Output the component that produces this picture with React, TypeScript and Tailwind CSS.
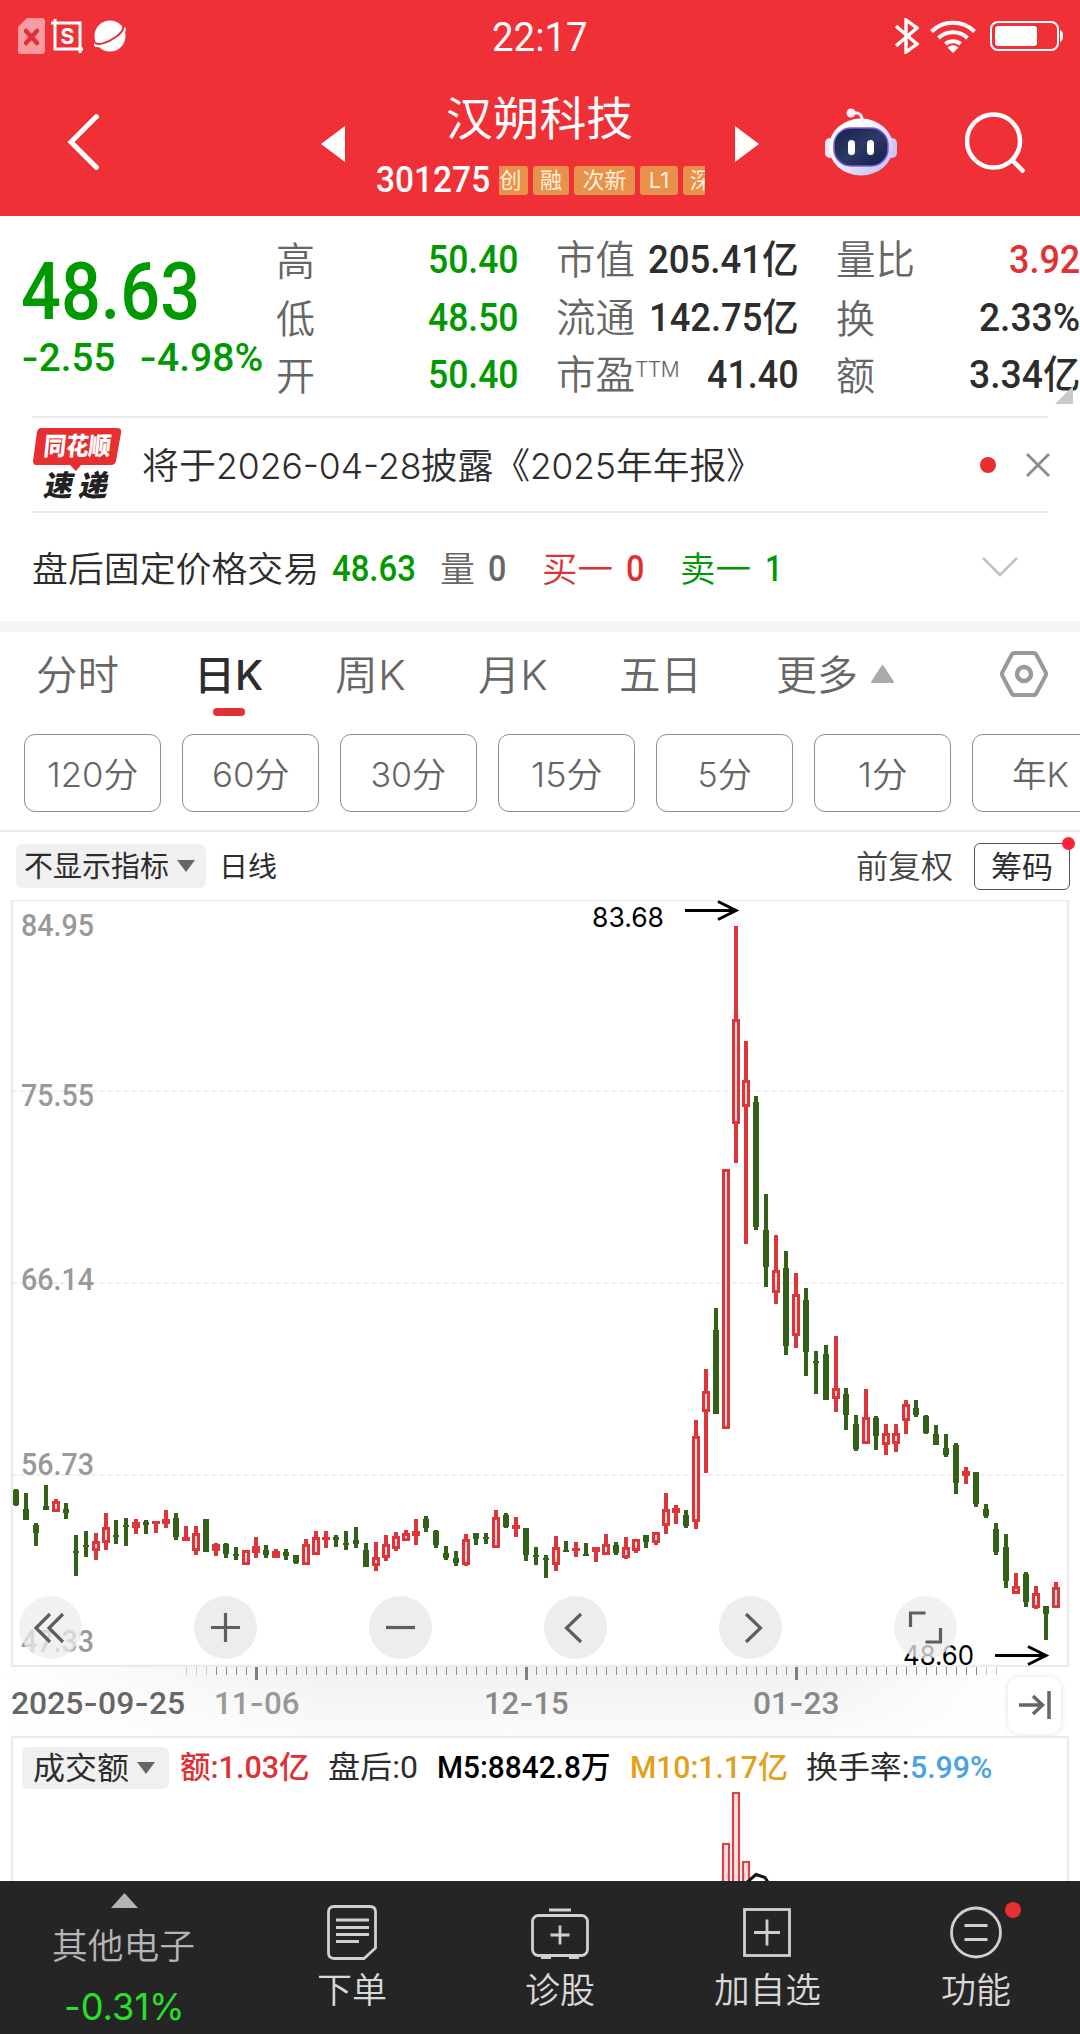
import { useLayoutEffect, useRef, type ReactNode } from "react";

type FitProps = { w: number; className?: string; children: ReactNode };

// Squeezes a single line of text to a fixed width, like the condensed app font.
function Fit({ w, className = "", children }: FitProps) {
  const ref = useRef<HTMLSpanElement>(null);

  useLayoutEffect(() => {
    const el = ref.current;
    if (el && el.offsetWidth) {
      el.style.transform = `scaleX(${w / el.offsetWidth})`;
    }
  }, [w, children]);

  return (
    <span className={`block shrink-0 whitespace-nowrap ${className}`} style={{ width: w }}>
      <span ref={ref} className="inline-block origin-left align-top">
        {children}
      </span>
    </span>
  );
}

const Dash = () => <span className="font-['Inter']">-</span>;

// [up, high, body top, body bottom, low], one entry per trading day
const candles: [number, number, number, number, number][] = [
  [0, 589, 590, 605, 606], [0, 593, 609, 620, 620], [0, 623, 625, 633, 646],
  [0, 585, 606, 610, 610], [1, 599, 601, 612, 612], [0, 603, 609, 613, 619],
  [0, 635, 651, 653, 676], [0, 631, 645, 647, 657], [1, 633, 641, 651, 660],
  [1, 613, 627, 643, 650], [0, 620, 635, 637, 644], [0, 618, 625, 627, 646],
  [1, 619, 622, 628, 634], [0, 620, 622, 625, 634], [1, 621, 621, 624, 633],
  [1, 610, 619, 624, 628], [0, 613, 618, 637, 640], [1, 626, 637, 641, 641],
  [1, 626, 633, 651, 655], [0, 619, 619, 652, 652], [1, 643, 644, 651, 656],
  [0, 643, 644, 654, 658], [0, 647, 654, 656, 660], [1, 650, 650, 665, 665],
  [1, 637, 646, 653, 658], [0, 645, 650, 655, 658], [1, 649, 651, 658, 658],
  [0, 649, 652, 656, 660], [0, 655, 655, 663, 664], [1, 639, 644, 665, 665],
  [1, 631, 637, 655, 655], [1, 631, 637, 640, 648], [0, 635, 637, 640, 647],
  [0, 631, 643, 645, 650], [0, 627, 640, 644, 648], [0, 643, 650, 667, 667],
  [1, 642, 657, 666, 671], [1, 635, 644, 658, 661], [1, 632, 636, 649, 651],
  [1, 630, 633, 641, 641], [1, 619, 631, 636, 645], [0, 616, 619, 628, 632],
  [0, 630, 631, 645, 648], [0, 646, 653, 658, 660], [0, 651, 658, 663, 666],
  [1, 634, 639, 665, 666], [0, 633, 633, 639, 645], [0, 633, 637, 639, 644],
  [1, 610, 617, 648, 648], [0, 613, 615, 627, 628], [1, 617, 625, 629, 637],
  [0, 628, 628, 655, 661], [0, 647, 655, 657, 665], [0, 655, 658, 660, 678],
  [1, 636, 647, 665, 671], [0, 641, 650, 652, 652], [1, 642, 648, 651, 657],
  [0, 643, 654, 656, 656], [1, 647, 647, 652, 662], [1, 634, 644, 655, 655],
  [0, 642, 645, 653, 655], [1, 637, 647, 658, 659], [1, 639, 639, 651, 653],
  [0, 635, 635, 642, 648], [1, 632, 632, 643, 645], [1, 593, 609, 626, 634],
  [1, 605, 608, 613, 624], [0, 610, 615, 626, 628], [1, 520, 536, 622, 629],
  [1, 469, 491, 512, 573], [0, 408, 430, 514, 514], [1, 269, 269, 529, 529],
  [1, 26, 119, 224, 263], [1, 141, 180, 207, 344], [0, 196, 202, 327, 330],
  [0, 294, 330, 367, 387], [1, 335, 370, 393, 404], [0, 351, 368, 446, 455],
  [1, 373, 394, 436, 448], [0, 388, 400, 452, 476], [0, 451, 461, 463, 494],
  [0, 445, 454, 500, 500], [1, 436, 488, 499, 512], [0, 488, 494, 515, 530],
  [0, 515, 524, 549, 551], [1, 489, 517, 544, 544], [0, 516, 518, 536, 550],
  [1, 524, 533, 545, 555], [1, 524, 533, 544, 552], [1, 500, 504, 521, 534],
  [0, 500, 508, 515, 517], [0, 515, 516, 533, 534], [0, 525, 534, 545, 545],
  [0, 534, 548, 555, 557], [0, 543, 545, 583, 594], [1, 567, 571, 576, 584],
  [0, 572, 572, 604, 607], [0, 604, 609, 616, 618], [0, 623, 629, 652, 655],
  [0, 634, 647, 681, 688], [1, 673, 686, 694, 694], [0, 672, 674, 702, 707],
  [1, 686, 693, 708, 709], [0, 706, 706, 714, 740], [1, 682, 687, 708, 708],
];

const axisPrices = [
  { label: "84.95", y: 36 },
  { label: "75.55", y: 206 },
  { label: "66.14", y: 390 },
  { label: "56.73", y: 575 },
  { label: "47.33", y: 752 },
];

function StatusBar() {
  return (
    <div className="flex h-[76px] items-center">
      <svg className="-mt-1 ml-[18px] h-9 w-[27px]" viewBox="0 0 27 36">
        <path d="M9 0h15a3 3 0 0 1 3 3v30a3 3 0 0 1-3 3H3a3 3 0 0 1-3-3V9z" fill="#f99ba0" />
        <path d="M8 13l11 12M19 13L8 25" stroke="#e0303a" strokeWidth="4.5" strokeLinecap="round" />
      </svg>
      <svg className="-mt-1 ml-1.5 h-[34px] w-8" viewBox="0 0 32 34" fill="none" stroke="#fff" strokeWidth="3">
        <path d="M0 4h29v30M4 0v30h28" />
        <text x="16.5" y="25" textAnchor="middle" fontSize="21" fontWeight="700" fontFamily="Inter" fill="#fff" stroke="none">S</text>
      </svg>
      <svg className="-mt-1 ml-[11px] h-8 w-8" viewBox="0 0 32 32">
        <circle cx="16" cy="16" r="15.5" fill="#fff" />
        <path d="M23 8c5-2 9-1 9 1 0 5-9 12-18 16-8 3-14 3-14 0 0-1 1-3 2-4" fill="#fff" />
        <path d="M1 22.500c2 3 12 1 20-5 6-4 9-8 8-11" fill="none" stroke="#e5303a" strokeWidth="2" />
      </svg>
      <Fit w={96} className="ml-[366px] text-[40px] leading-[76px] font-['Roboto']">22:17</Fit>
      <svg className="-mt-1 ml-[307px] h-9 w-6" viewBox="0 0 24 36" fill="none" stroke="#fff" strokeWidth="3.4">
        <path d="M1 8l21 18-11 8V2l11 8L1 28" />
      </svg>
      <svg className="-mt-1 ml-[11px] h-[33px] w-[46px]" viewBox="0 0 46 33" fill="none" stroke="#fff" strokeWidth="4">
        <path d="M1.500 11.500a31 31 0 0 1 43 0M8.500 18a21.500 21.500 0 0 1 29 0M15.500 24a11.500 11.500 0 0 1 15 0" />
        <path d="M17.500 27.500q5.500-4.500 11 0L23 33z" fill="#fff" stroke="none" />
      </svg>
      <svg className="-mt-1 ml-3.5 h-[30px] w-[74px]" viewBox="0 0 74 30">
        <rect x="1" y="1" width="67" height="28" rx="7" fill="none" stroke="#fff" strokeWidth="2" />
        <path d="M70 9q3 1 3 6t-3 6z" fill="#fff" />
        <rect x="5" y="5" width="42" height="20" rx="3" fill="#fff" />
      </svg>
    </div>
  );
}

function Robot() {
  return (
    <svg className="ml-[66px] h-[68px] w-[72px]" viewBox="0 0 72 68">
      <defs>
        <linearGradient id="head" x1="0" y1="0" x2="1" y2="1">
          <stop offset="0.3" stopColor="#fff" />
          <stop offset="1" stopColor="#b9b5f6" />
        </linearGradient>
        <linearGradient id="visor" x1="0" y1="0" x2="1" y2="1">
          <stop offset="0" stopColor="#16204a" />
          <stop offset="0.5" stopColor="#2b3a63" />
          <stop offset="1" stopColor="#151c48" />
        </linearGradient>
      </defs>
      <path d="M37 12c0-5-3-8-9-7" fill="none" stroke="#f1e9fb" strokeWidth="3" />
      <circle cx="26" cy="5" r="4.500" fill="#f6effd" />
      <rect x="0" y="30" width="12" height="20" rx="5" fill="#e9e7fd" />
      <rect x="60" y="30" width="12" height="20" rx="5" fill="#c9c6f8" />
      <ellipse cx="36" cy="39" rx="32" ry="28.500" fill="url(#head)" />
      <rect x="9" y="20" width="54" height="38" rx="17" fill="url(#visor)" stroke="#7d5be6" strokeWidth="1.500" />
      <rect x="23" y="32" width="7" height="15" rx="3.500" fill="#fff" />
      <rect x="42" y="32" width="7" height="15" rx="3.500" fill="#fff" />
    </svg>
  );
}

function Tag({ children, className = "" }: { children: ReactNode; className?: string }) {
  return (
    <span className={`h-[29px] shrink-0 rounded-[3px] bg-[#e8914b] text-center text-[22px] leading-[29px] text-[#fff0d8] ${className}`}>
      {children}
    </span>
  );
}

function Header() {
  return (
    <header className="h-[216px] bg-[#ef3037] text-white">
      <StatusBar />
      <div className="flex h-[132px] items-center">
        <svg className="ml-[67px] h-14 w-8" viewBox="0 0 32 56" fill="none" stroke="#fff" strokeWidth="5">
          <path d="M31 1L4 28l27 27" />
        </svg>
        <svg className="mt-1 ml-[222px] h-9 w-6 shrink-0" viewBox="0 0 24 36">
          <path d="M24 0v36L0 18z" fill="#fff" />
        </svg>
        <div className="ml-[31px] w-[329px] shrink-0 self-start pt-[13px]">
          <Fit w={187} className="ml-[70px] text-[46px] leading-[58px]">汉朔科技</Fit>
          <div className="mt-2 flex h-[50px] items-center">
            <Fit w={114} className="text-[37px] leading-[50px] font-medium font-['Roboto']">301275</Fit>
            <div className="ml-[9px] flex w-[206px] gap-[5px] overflow-hidden">
              <Tag className="w-[29px] rounded-l-none pr-1.5">创</Tag>
              <Tag className="w-9">融</Tag>
              <Tag className="w-[61px]">次新</Tag>
              <Tag className="w-[38px]">L1</Tag>
              <Tag className="w-9">深</Tag>
            </div>
          </div>
        </div>
        <svg className="mt-1 ml-[30px] h-9 w-6 shrink-0" viewBox="0 0 24 36">
          <path d="M0 0v36l24-18z" fill="#fff" />
        </svg>
        <Robot />
        <svg className="ml-[68px] h-[62px] w-[62px]" viewBox="0 0 62 62" fill="none" stroke="#fff" strokeWidth="4.500">
          <circle cx="28.500" cy="30" r="26.500" />
          <path d="M47 49l12 12" />
        </svg>
      </div>
    </header>
  );
}

const num = "text-[39px] font-medium font-['Roboto','Noto_Sans_CJK_SC',sans-serif]";

function Quote() {
  return (
    <section className="relative flex h-[200px]">
      <div className="w-[276px] shrink-0 pt-[36px] pl-[21px] text-[#009900]">
        <Fit w={179} className="text-[80px] leading-[80px] font-medium font-['Roboto']">48.63</Fit>
        <div className={`flex gap-6 leading-[50px] ${num}`}>
          <Fit w={94}><Dash />2.55</Fit>
          <Fit w={124}><Dash />4.98%</Fit>
        </div>
      </div>
      <div className="w-[243px] shrink-0 pt-[16px] leading-[57.5px]">
        {[["高", "50.40"], ["低", "48.50"], ["开", "50.40"]].map(([label, value]) => (
          <div key={label} className="flex justify-between">
            <span className="text-[39px] font-[350] text-[#666]">{label}</span>
            <Fit w={91} className={`text-[#009900] ${num}`}>{value}</Fit>
          </div>
        ))}
      </div>
      <div className="ml-[37px] w-[243px] shrink-0 pt-[16px] leading-[57.5px]">
        <div className="flex justify-between">
          <span className="text-[39.500px] font-[350] text-[#666]">市值</span>
          <Fit w={151} className={`text-[#2d2d2d] ${num}`}>205.41亿</Fit>
        </div>
        <div className="flex justify-between">
          <span className="text-[39.500px] font-[350] text-[#666]">流通</span>
          <Fit w={150} className={`text-[#2d2d2d] ${num}`}>142.75亿</Fit>
        </div>
        <div className="flex justify-between">
          <span className="flex text-[39.500px] font-[350] text-[#666]">
            市盈
            <span className="-mt-1.5 text-[21px] font-light tracking-[-0.5px]">TTM</span>
          </span>
          <Fit w={92} className={`text-[#2d2d2d] ${num}`}>41.40</Fit>
        </div>
      </div>
      <div className="ml-[37px] w-[244px] shrink-0 pt-[16px] leading-[57.5px]">
        <div className="flex justify-between">
          <span className="text-[39.500px] font-[350] text-[#666]">量比</span>
          <Fit w={71} className={`text-[#e03236] ${num}`}>3.92</Fit>
        </div>
        <div className="flex justify-between">
          <span className="text-[39px] font-[350] text-[#666]">换</span>
          <Fit w={101} className={`text-[#2d2d2d] ${num}`}>2.33%</Fit>
        </div>
        <div className="flex justify-between">
          <span className="text-[39px] font-[350] text-[#666]">额</span>
          <Fit w={111} className={`text-[#2d2d2d] ${num}`}>3.34亿</Fit>
        </div>
      </div>
      <svg className="absolute right-[7px] bottom-3 h-[18px] w-[18px]" viewBox="0 0 18 18">
        <path d="M18 0v18H0z" fill="#c9c9c9" />
      </svg>
    </section>
  );
}

function News() {
  return (
    <section className="mx-8 flex h-[97px] items-center border-y-2 border-[#ebebeb]">
      <div className="relative h-[76px] w-[90px] shrink-0">
        <svg className="absolute inset-0" viewBox="0 0 90 76">
          <path d="M9 1h76q5 0 4 5l-5 28q-1 4-5 4H49l-5 6-6-6H4q-3 0-3-4L5 5q1-4 4-4z" fill="#e52f30" />
        </svg>
        <div className="relative flex flex-col items-center">
          <Fit w={67} className="h-[38px] -skew-x-6 text-[25px] leading-[39px] font-black text-white">同花顺</Fit>
          <Fit w={64} className="-skew-x-12 text-[29px] leading-[42px] font-black text-[#222]">速 递</Fit>
        </div>
      </div>
      <div className="ml-5 flex pt-0.5 text-[36px] leading-[60px] text-[#2d2d2d] font-[350]">
        <Fit w={74}>将于</Fit>
        <Fit w={205}>2026-04-28</Fit>
        <Fit w={109}>披露《</Fit>
        <Fit w={86}>2025</Fit>
        <Fit w={147}>年年报》</Fit>
      </div>
      <span className="ml-[217px] h-4 w-4 shrink-0 rounded-full bg-[#e52f30]" />
      <svg className="-mr-0.5 ml-[30px] h-6 w-6 shrink-0" viewBox="0 0 24 24" stroke="#8c8c8c" strokeWidth="2.800">
        <path d="M1 1l22 22M23 1L1 23" />
      </svg>
    </section>
  );
}

function AfterHours() {
  return (
    <section className="flex h-[107px] items-center pt-1 pl-8 text-[35px] leading-[60px] font-[350]">
      <Fit w={287} className="text-[#2d2d2d]">盘后固定价格交易</Fit>
      <Fit w={84} className="ml-[13px] text-[36px] font-medium text-[#009900] font-['Roboto']">48.63</Fit>
      <span className="ml-6 text-[#666]">量</span>
      <Fit w={18} className="ml-[13px] text-[36px] font-medium text-[#666] font-['Roboto']">0</Fit>
      <Fit w={71} className="ml-[36px] text-[#dc3236]">买一</Fit>
      <Fit w={18} className="ml-[13px] text-[36px] font-medium text-[#dc3236] font-['Roboto']">0</Fit>
      <Fit w={71} className="ml-[36px] text-[#009900]">卖一</Fit>
      <Fit w={17} className="ml-[14px] text-[36px] font-medium text-[#009900] font-['Roboto']">1</Fit>
      <svg className="-mt-1 ml-[200px] h-5 w-9" viewBox="0 0 36 20" fill="none" stroke="#c4c4c4" strokeWidth="2.800">
        <path d="M1 1l17 17L35 1" />
      </svg>
    </section>
  );
}

function Tabs() {
  return (
    <nav className="flex h-[102px] items-start pt-[14px] pl-9 text-[40.500px] leading-[60px] font-[350] text-[#666]">
      <Fit w={83}>分时</Fit>
      <div className="ml-[75px] flex flex-col items-center">
        <Fit w={69} className="font-medium text-[#2d2d2d]">日K</Fit>
        <span className="mt-0.5 h-2 w-8 rounded bg-[#e03236]" />
      </div>
      <Fit w={71} className="ml-[72px]">周K</Fit>
      <Fit w={70} className="ml-[72px]">月K</Fit>
      <Fit w={83} className="ml-[71px]">五日</Fit>
      <Fit w={82} className="ml-[74px]">更多</Fit>
      <svg className="mt-[19px] ml-[13px] h-[18px] w-[23px]" viewBox="0 0 23 18">
        <path d="M11.500 1L22 17H1z" fill="#aaa" stroke="#aaa" strokeWidth="2" strokeLinejoin="round" />
      </svg>
      <svg className="mt-1 ml-[106px] h-12 w-12" viewBox="0 0 48 48" fill="none" stroke="#999" strokeWidth="4" strokeLinejoin="round">
        <path d="M14.500 3h19q2 0 3 2l9 17q1 2 0 4l-9 17q-1 2-3 2h-19q-2 0-3-2l-9-17q-1-2 0-4l9-17q1-2 3-2z" />
        <circle cx="24" cy="24" r="7" strokeWidth="4.500" />
      </svg>
    </nav>
  );
}

const periods = [
  { label: "120分", w: 91 },
  { label: "60分", w: 77 },
  { label: "30分", w: 76 },
  { label: "15分", w: 72 },
  { label: "5分", w: 54 },
  { label: "1分", w: 49 },
  { label: "年K", w: 57 },
];

function Periods() {
  return (
    <div className="flex h-[96px] gap-[21px] overflow-hidden pl-6">
      {periods.map((p) => (
        <div
          key={p.label}
          className="flex h-[78px] w-[137px] shrink-0 justify-center rounded-[11px] border border-[#8f8f8f] pt-0.5 text-[34px] leading-[76px] font-[350] text-[#666]"
        >
          <Fit w={p.w}>{p.label}</Fit>
        </div>
      ))}
    </div>
  );
}

const Caret = ({ className = "" }: { className?: string }) => (
  <svg className={`h-3 w-[18px] shrink-0 ${className}`} viewBox="0 0 18 12">
    <path d="M0 0h18L9 12z" fill="#666" />
  </svg>
);

function ChartToolbar() {
  return (
    <div className="flex h-[70px] items-center border-t-2 border-[#ebebeb] px-4 text-[#2d2d2d]">
      <div className="flex h-11 w-[190px] shrink-0 items-center rounded-md bg-[#f0f0f0] pl-2 text-[29px]">
        <Fit w={145} className="pt-0.5 leading-[44px]">不显示指标</Fit>
        <Caret className="ml-2" />
      </div>
      <Fit w={58} className="ml-[13px] pt-0.5 text-[28.500px] leading-[44px]">日线</Fit>
      <Fit w={97} className="ml-auto pt-px text-[32px] leading-[44px] font-[350] text-[#444]">前复权</Fit>
      <div className="relative -mr-1.5 ml-[21px] flex h-[47px] w-24 items-center justify-center rounded-md border border-[#555]">
        <Fit w={62} className="pt-px text-[31px] leading-[44px]">筹码</Fit>
        <span className="absolute -top-[7px] -right-[6px] h-[13px] w-[13px] rounded-full bg-[#fb2338]" />
      </div>
    </div>
  );
}

function Candle({ index, data }: { index: number; data: [number, number, number, number, number] }) {
  const [up, high, top, bottom, low] = data;
  const x = 16 + index * 10;
  if (!up) {
    return (
      <g fill="#33611a">
        <rect x={x - 2} y={high} width="4" height={low - high} />
        <rect x={x - 3} y={top} width="6" height={Math.max(bottom - top, 2)} />
      </g>
    );
  }
  return (
    <g fill="#dc363b">
      <rect x={x - 2} y={high} width="4" height={low - high} />
      <rect x={x - 4} y={top} width="8" height={bottom - top} />
      {bottom - top > 7 && <rect x={x - 1} y={top + 3} width="2" height={bottom - top - 6} fill="#ffdada" />}
    </g>
  );
}

const controls = [
  "M31 18L17 32l14 14M44 18L30 32l14 14",
  "M17 31.500h29M31.500 17v29",
  "M17 31.500h29",
  "M37 18L22.500 32 37 46",
  "M27 18l14.500 14L27 46",
  "M16.500 31V17h15M46.500 32v14h-15",
];

function KChart() {
  return (
    <div className="relative h-[767px]">
      <svg className="block h-[767px] w-[1080px]" viewBox="0 0 1080 767">
        <rect x="12" y="0" width="1056" height="766" fill="none" stroke="#ebebeb" strokeWidth="2.500" />
        {[191, 383, 575].map((y) => (
          <path key={y} d={`M12 ${y}H1068`} stroke="#ececec" strokeWidth="1.500" strokeDasharray="5 3" />
        ))}
        {axisPrices.map((p) => (
          <text key={p.label} x="21" y={p.y} textLength="73" lengthAdjust="spacingAndGlyphs" fontSize="32" fontWeight="500" fontFamily="Roboto" fill="#999">
            {p.label}
          </text>
        ))}
        {candles.map((c, i) => (
          <Candle key={i} index={i} data={c} />
        ))}
        <g fontSize="26.500" fontFamily="Inter" fill="#000">
          <text x="592" y="27" textLength="72" lengthAdjust="spacingAndGlyphs">83.68</text>
          <text x="903" y="765" textLength="71" lengthAdjust="spacingAndGlyphs">48.60</text>
        </g>
        <g fill="none" stroke="#000" strokeWidth="3">
          <path d="M685 10.500h50M718 1.500l18 9-18 9" />
          <path d="M995 755.500h50M1028 746.500l18 9-18 9" />
        </g>
      </svg>
      <div className="absolute bottom-2 left-[19px] flex gap-28">
        {controls.map((d, i) => (
          <svg key={d} className="h-[63px] w-[63px]" viewBox="0 0 63 63">
            <circle cx="31.500" cy="31.500" r="31.500" fill="#eeecee" fillOpacity={i === 0 || i === 5 ? 0.75 : 1} />
            <path d={d} fill="none" stroke="#5e5e5e" strokeWidth="3.200" />
          </svg>
        ))}
      </div>
    </div>
  );
}

function DateAxis() {
  const ticks = Array.from({ length: 82 }, (_, i) => 186 + i * 10);
  return (
    <div className="relative h-[69px] bg-linear-to-b from-[#f1f1f1] to-[#fbfbfb]">
      <div className="absolute inset-0 bg-linear-to-r from-white via-transparent via-30% to-transparent" />
      <div className="absolute inset-y-0 right-0 w-[260px] bg-linear-to-l from-white from-30% to-transparent" />
      <svg className="absolute top-0 left-0 h-[14px] w-[1080px]" viewBox="0 0 1080 14">
        {ticks.map((x) =>
          (x - 256) % 270 === 0 ? (
            <rect key={x} x={x - 1} y="0" width="3" height="13" fill="#7f7f7f" />
          ) : (
            <rect key={x} x={x} y="0" width="1" height="8" fill="#8c8c8c" opacity={x < 216 ? 0.4 : x > 976 ? 0.5 : 1} />
          )
        )}
      </svg>
      <div className="relative flex h-[69px] items-center pt-[3px] pl-[11px] text-[32px] leading-[60px] font-medium text-[#888] font-['Roboto']">
        <Fit w={174} className="text-[#666]">2025<Dash />09<Dash />25</Fit>
        <Fit w={86} className="ml-[29px] text-[#999]">11<Dash />06</Fit>
        <Fit w={85} className="ml-[184px]">12<Dash />15</Fit>
        <Fit w={87} className="ml-[184px]">01<Dash />23</Fit>
        <div className="mt-1 ml-[168px] flex h-[57px] w-[53px] items-center justify-center rounded-xl bg-white shadow-[0_0_6px_rgba(0,0,0,0.12)]">
          <svg className="h-7 w-8" viewBox="0 0 32 28" fill="none" stroke="#666" strokeWidth="3.500">
            <path d="M0 14h23M14 5l9.500 9L14 23M30 0v28" />
          </svg>
        </div>
      </div>
    </div>
  );
}

function VolumePanel() {
  return (
    <div className="relative mx-[11px] h-[145px] overflow-hidden border-x-2 border-t-2 border-[#ebebeb]">
      <div className="flex items-center pt-[9px] pl-[9px] text-[31px] leading-[42px] font-['Roboto','Noto_Sans_CJK_SC',sans-serif]">
        <div className="flex h-[42px] w-[147px] shrink-0 items-center rounded-md bg-[#f0f0f0] pl-[11px] text-[#2d2d2d]">
          <Fit w={96} className="pt-0.5">成交额</Fit>
          <Caret className="ml-2" />
        </div>
        <Fit w={130} className="ml-[11px] font-medium text-[#dc3236]">额:1.03亿</Fit>
        <Fit w={90} className="ml-[18px] text-[#2d2d2d]">盘后:0</Fit>
        <Fit w={174} className="ml-[19px] font-medium text-black">M5:8842.8万</Fit>
        <Fit w={158} className="ml-[19px] font-medium text-[#e3a01b]">M10:1.17亿</Fit>
        <Fit w={104} className="ml-[18px] text-[#2d2d2d]">换手率:</Fit>
        <Fit w={82} className="font-medium text-[#4aa3df]">5.99%</Fit>
      </div>
      <svg className="absolute top-[54px] left-[707px] h-[90px] w-[60px]" viewBox="0 0 60 90">
        <g fill="#fbe0de" stroke="#d3444e" strokeWidth="2.200">
          <rect x="3" y="52" width="6" height="60" />
          <rect x="13" y="1" width="6" height="110" />
          <rect x="23" y="70" width="6" height="40" />
        </g>
        <path d="M25 92l11-9.500 9 3 5 8" fill="none" stroke="#111" strokeWidth="3" />
      </svg>
    </div>
  );
}

function BottomNav() {
  return (
    <nav className="flex h-[153px] bg-[#252525] text-[35px] font-[350] text-[#d8d8d8]">
      <div className="flex w-[248px] flex-col items-center pt-3">
        <svg className="h-[15px] w-[27px]" viewBox="0 0 27 15">
          <path d="M13.500 0L27 15H0z" fill="#b5b5b5" />
        </svg>
        <Fit w={143} className="mt-[13px] -ml-0.5 text-[#b5b5b5] leading-[50px]">其他电子</Fit>
        <Fit w={121} className="mt-[11px] text-[36.500px] leading-[50px] font-normal text-[#26e02b]"><Dash />0.31%</Fit>
      </div>
      <div className="flex w-[208px] flex-col items-center pt-6">
        <svg className="h-[55px] w-[50px]" viewBox="0 0 50 55" fill="none" stroke="#d0d0d0" strokeWidth="2.800">
          <path d="M7 1.500h36q5.500 0 5.500 5.500v36L37 53.500H7q-5.500 0-5.500-5.500V7q0-5.500 5.500-5.500z" />
          <path d="M9 15h33M9 22.500h33M9 29.500h33M9 36.500h23" />
        </svg>
        <Fit w={70} className="mt-1 leading-[52px]">下单</Fit>
      </div>
      <div className="flex w-[208px] flex-col items-center pt-6">
        <svg className="h-[55px] w-[58px]" viewBox="0 0 58 55" fill="none" stroke="#d0d0d0" strokeWidth="2.800">
          <path d="M18 5h22M19.500 30h19M29 20.500v19M10 52.500h10M38 52.500h10" />
          <rect x="1.500" y="10.500" width="55" height="40" rx="6" />
        </svg>
        <Fit w={70} className="mt-1 leading-[52px]">诊股</Fit>
      </div>
      <div className="flex w-[208px] flex-col items-center pt-6 pr-0.5">
        <svg className="h-[55px] w-[50px]" viewBox="0 0 50 55" fill="none" stroke="#d0d0d0" strokeWidth="2.800">
          <rect x="2.500" y="4.500" width="45" height="46" />
          <path d="M12 27.500h26M25 14.500v26" />
        </svg>
        <Fit w={107} className="mt-1 leading-[52px]">加自选</Fit>
      </div>
      <div className="relative flex w-[208px] flex-col items-center pt-6">
        <svg className="h-[55px] w-[54px]" viewBox="0 0 54 55" fill="none" stroke="#d0d0d0" strokeWidth="2.800">
          <circle cx="27" cy="27.500" r="24.500" />
          <path d="M15.500 20.500h23M15.500 34.500h23" />
        </svg>
        <span className="absolute top-[21px] left-[133px] h-4 w-4 rounded-full bg-[#e83030]" />
        <Fit w={70} className="mt-1 leading-[52px]">功能</Fit>
      </div>
    </nav>
  );
}

export default function App() {
  return (
    <div className="h-[2034px] w-[1080px] overflow-hidden bg-white font-['Inter','Noto_Sans_CJK_SC',sans-serif]">
      <Header />
      <Quote />
      <News />
      <AfterHours />
      <div className="mt-px h-[11px] bg-[#f5f5f5]" />
      <Tabs />
      <Periods />
      <ChartToolbar />
      <KChart />
      <DateAxis />
      <VolumePanel />
      <BottomNav />
    </div>
  );
}
